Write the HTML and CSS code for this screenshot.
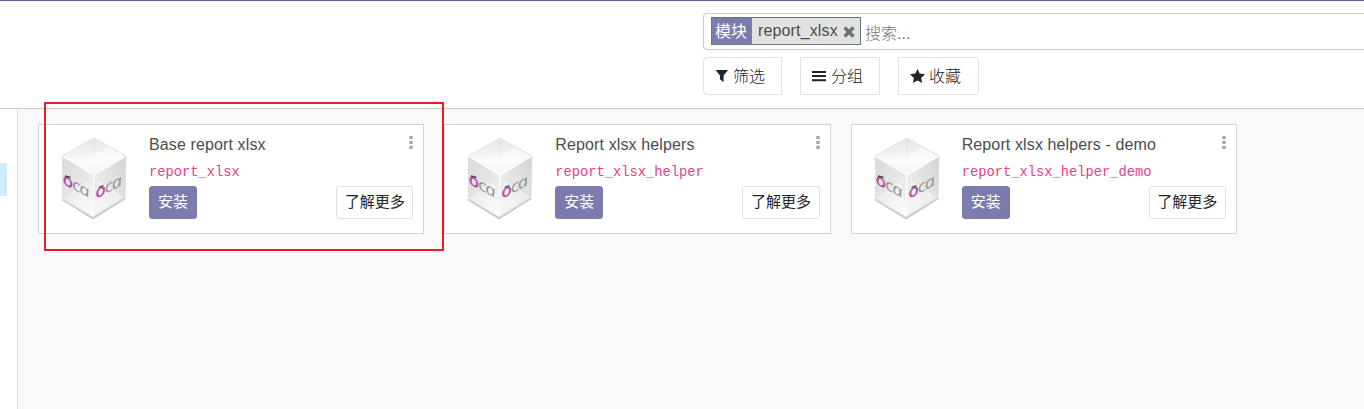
FILE: index.html
```html
<!DOCTYPE html>
<html lang="zh-CN">
<head>
<meta charset="utf-8">
<title>应用</title>
<link rel="stylesheet" href="styles.css">
</head>
<body>
<svg class="defs" width="0" height="0" aria-hidden="true">
  <defs>
    <linearGradient id="topFace" x1="0" y1="0" x2="0" y2="1"><stop offset="0" stop-color="#e6e6e6"/><stop offset=".5" stop-color="#f4f4f4"/><stop offset="1" stop-color="#ececec"/></linearGradient>
    <linearGradient id="leftFace" x1="0" y1="0" x2=".6" y2="1"><stop offset="0" stop-color="#dadada"/><stop offset=".5" stop-color="#e4e4e4"/><stop offset="1" stop-color="#f5f5f5"/></linearGradient>
    <linearGradient id="rightFace" x1="1" y1="0" x2="0" y2="1"><stop offset="0" stop-color="#d2d2d2"/><stop offset=".5" stop-color="#e6e6e6"/><stop offset="1" stop-color="#f2f2f2"/></linearGradient>
    <symbol id="cube" viewBox="0 0 66 84">
      <path d="M1 62 32 81 64 61" fill="none" stroke="#c8c8c8" stroke-width="2.5"/>
      <path d="M33 1 65 19 33 38 1 19Z" fill="url(#topFace)"/>
      <path d="M1 19 33 38 32 80 1 62Z" fill="url(#leftFace)"/>
      <path d="M33 38 65 19 64 61 32 80Z" fill="url(#rightFace)"/>
      <path d="M2 61 27 43 32 78Z" fill="#fff" opacity=".3"/>
      <path d="M32 78 37 43 63 60Z" fill="#fff" opacity=".35"/>
      <path d="M2 20Q31 23 47 10L64 19 33 37Z" fill="#fff" opacity=".55"/>
      <path d="M33 2V20M28 41 3 60M38 41 62 59" stroke="#c4c4c4" stroke-width=".8" opacity=".3"/>
      <path d="M1 19 33 38 65 19M33 38 32 80" fill="none" stroke="#fff" stroke-width="1.1"/>
      <path d="M1 19 33 1 65 19 64 61" fill="none" stroke="#dcdcdc" stroke-width=".8"/>
      <text class="oca" transform="matrix(1.06 .58 .15 1.02 2.6 47)"><tspan class="oca-o">o</tspan>ca</text>
      <text class="oca" transform="matrix(1.06 -.55 .15 .88 35.2 61.5)"><tspan class="oca-o">o</tspan>ca</text>
      <path d="M4 39 9.5 40.5M37.5 50.5 42.5 48.5" stroke="#444" stroke-width="1.3"/>
    </symbol>
    <symbol id="dots" viewBox="0 0 4 13"><path d="M.3 0h3.4v3.2H.3zM.3 4.9h3.4v3.2H.3zM.3 9.8h3.4V13H.3z"/></symbol>
  </defs>
</svg>
<header class="control-panel">
  <div class="search">
    <div class="facet">
      <span class="facet-label">模块</span>
      <span class="facet-value">report_xlsx</span>
      <svg class="remove" viewBox="0 0 12 12"><path d="M1.6 1.6 10.4 10.4M10.4 1.6 1.6 10.4" stroke="currentColor" stroke-width="3.6"/></svg>
    </div>
    <span class="placeholder">搜索...</span>
  </div>
  <div class="filters">
    <button class="filter first"><svg class="icon" viewBox="0 0 14 14"><path d="M.5 1h12.6L8.6 6.5V13L5 10.4V6.5Z"/></svg><span>筛选</span></button>
    <button class="filter group"><svg class="icon" viewBox="0 0 14 14"><path d="M0 2h14v2H0zM0 6h14v2H0zM0 10.3h14v2H0z"/></svg><span>分组</span></button>
    <button class="filter last"><svg class="icon star" viewBox="0 0 15 14"><path d="M7.5 0 9.7 4.6 15 5.3 11.1 8.9 12.1 14 7.5 11.5 2.9 14 3.9 8.9 0 5.3 5.3 4.6Z"/></svg><span>收藏</span></button>
  </div>
</header>
<div class="content">
  <aside class="sidebar"><div class="selected"></div></aside>
  <main class="kanban">
    <article class="card">
      <svg class="module-icon"><use href="#cube"/></svg>
      <div class="details">
        <div class="title">Base report xlsx</div>
        <code>report_xlsx</code>
        <div class="actions"><button class="install">安装</button><button class="more">了解更多</button></div>
      </div>
      <svg class="menu"><use href="#dots"/></svg>
    </article>
    <article class="card">
      <svg class="module-icon"><use href="#cube"/></svg>
      <div class="details">
        <div class="title">Report xlsx helpers</div>
        <code>report_xlsx_helper</code>
        <div class="actions"><button class="install">安装</button><button class="more">了解更多</button></div>
      </div>
      <svg class="menu"><use href="#dots"/></svg>
    </article>
    <article class="card">
      <svg class="module-icon"><use href="#cube"/></svg>
      <div class="details">
        <div class="title">Report xlsx helpers - demo</div>
        <code>report_xlsx_helper_demo</code>
        <div class="actions"><button class="install">安装</button><button class="more">了解更多</button></div>
      </div>
      <svg class="menu"><use href="#dots"/></svg>
    </article>
  </main>
</div>
<div class="highlight"></div>
</body>
</html>
```

FILE: styles.css
```css
* { box-sizing: border-box; }
body {
  margin: 0;
  height: 409px;
  overflow: hidden;
  position: relative;
  display: flex;
  flex-direction: column;
  background: #fff;
  color: #4c4c4c;
  font: 16px/24px "Liberation Sans", "Noto Sans CJK SC", sans-serif;
}
button { font: inherit; margin: 0; padding: 0; background: #fff; white-space: nowrap; }
.defs { position: absolute; }
.control-panel {
  flex: none;
  height: 109px;
  padding: 12px 0 0 703px;
  border-top: 1px solid #5f5e97;
  border-bottom: 1px solid #ccc;
}
.search {
  display: flex;
  align-items: flex-start;
  height: 37px;
  padding: 3px 0 0 7px;
  border: 1px solid #ccc;
  border-right: 0;
  border-radius: 4px 0 0 4px;
}
.facet {
  display: flex;
  width: 150px;
  height: 28px;
  border: 1px solid #6c757d;
  background: #e2e2e0;
  line-height: 26px;
}
.facet-label { width: 40px; padding-left: 3px; background: #7c7bad; color: #fff; line-height: 28px; }
.facet-value { width: 86px; padding-left: 6px; letter-spacing: .14px; }
.remove { width: 12px; height: 12px; margin: 8px 0 0 5px; color: #6c757d; }
.placeholder { margin: 5px 0 0 4px; color: #757575; font-weight: 300; }
.filters { display: flex; margin-top: 7px; }
.filter {
  display: flex;
  align-items: center;
  width: 79px;
  height: 38px;
  padding-left: 11px;
  gap: 4px;
  border: 1px solid #dee2e6;
  color: #212529;
}
.filter span { padding-top: 2px; font-weight: 300; }
.first { border-radius: 4px 0 0 4px; }
.group { width: 80px; margin: 0 18px; gap: 5px; }
.last { width: 81px; border-radius: 0 4px 4px 0; }
.icon { width: 14px; height: 14px; fill: #212529; }
.star { width: 15px; }
.content { flex: 1; display: flex; }
.sidebar { width: 18px; padding-top: 54px; border-right: 1px solid #dedede; }
.selected { width: 7px; height: 33px; background: #d1ecf9; }
.kanban {
  flex: 1;
  display: grid;
  grid-template-columns: repeat(3, 386.33px);
  align-content: start;
  gap: 20px;
  padding: 15px 0 0 20px;
  background: #f9f9f9;
}
.card {
  position: relative;
  display: flex;
  height: 110px;
  padding: 8px 10px 0 22px;
  border: 1px solid #ced4da;
  background: #fff;
}
.module-icon { flex: none; width: 66px; height: 84px; margin-top: 4px; }
.oca { font: italic 17px "Open Sans", sans-serif; fill: #929292; letter-spacing: -.9px; }
.oca-o { fill: #b64b9c; stroke: #b64b9c; stroke-width: .5px; }
.details { flex: 1; display: flex; flex-direction: column; padding-left: 22px; }
.title { height: 24px; letter-spacing: .12px; }
code {
  height: 29px;
  color: #e83e8c;
  font: 13.75px/31px "Liberation Mono", monospace;
}
.actions { display: flex; justify-content: space-between; }
.install, .more { height: 33px; border-radius: 3px; padding-bottom: 2px; font-size: 15px; line-height: 29px; }
.install { width: 48px; border: 1px solid #7c7bad; background: #7c7bad; color: #fff; }
.more { width: 77.3px; border: 1px solid #dee2e6; color: #212529; }
.menu { position: absolute; top: 11px; right: 10px; width: 4px; height: 13px; fill: #a6a6a6; }
.highlight {
  position: absolute;
  left: 44px;
  top: 102px;
  width: 400px;
  height: 149px;
  border: 2px solid #ed1c24;
}
```
